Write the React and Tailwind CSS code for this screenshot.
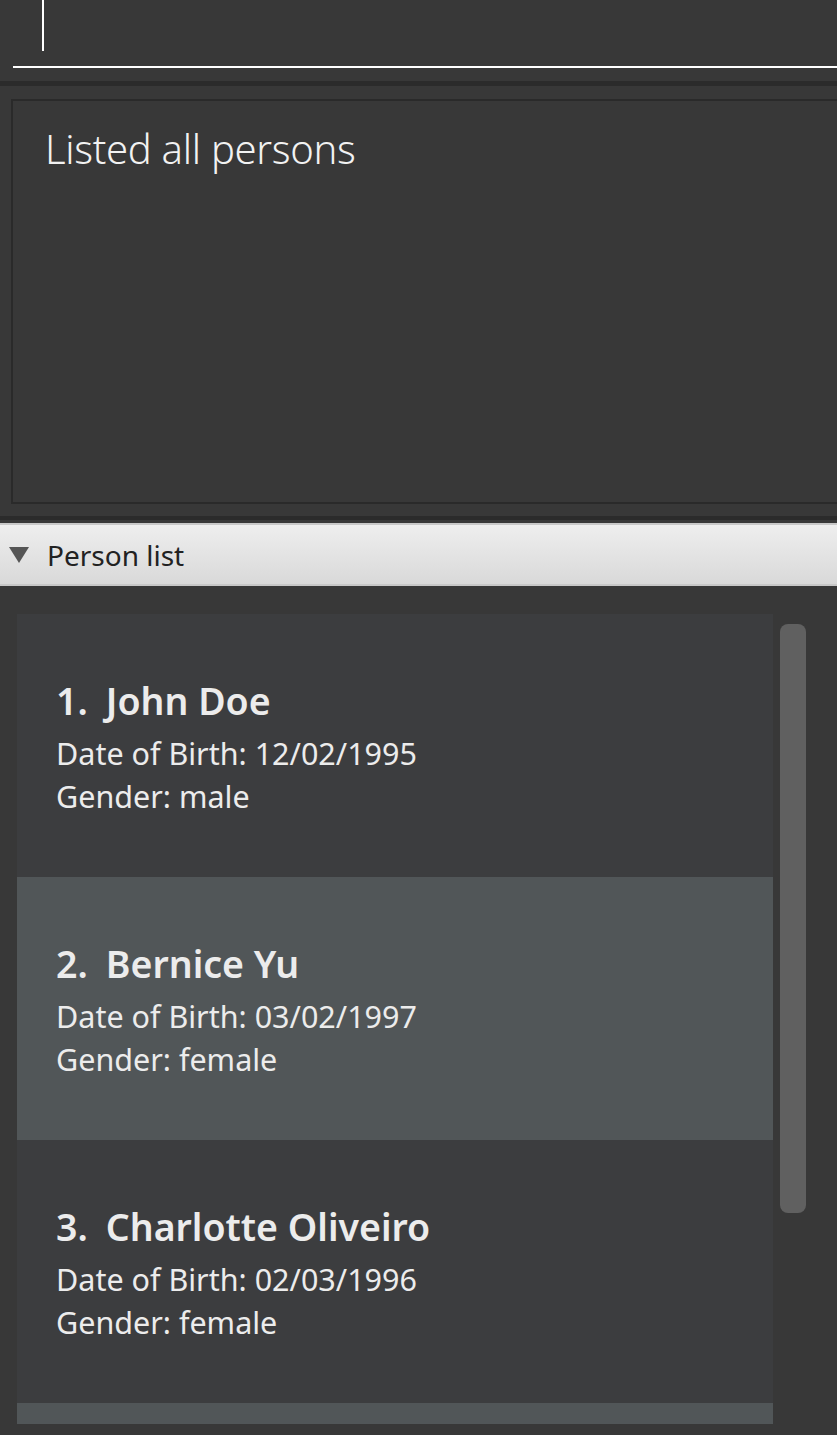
const persons = [
  { id: 1, name: "John Doe", dob: "12/02/1995", gender: "male" },
  { id: 2, name: "Bernice Yu", dob: "03/02/1997", gender: "female" },
  { id: 3, name: "Charlotte Oliveiro", dob: "02/03/1996", gender: "female" },
];

const App = () => {
  return (
    <div
      className="w-[837px] h-[1435px] overflow-hidden bg-[#383838] flex flex-col"
      style={{ fontFamily: '"Noto Sans", "Open Sans", sans-serif' }}
    >
      {/* COMMAND BOX */}
      <div className="h-[81px] pl-[13px] flex flex-col">
        <div className="h-[66px] pl-[29px]">
          <div className="w-[2px] h-[51px] bg-white"></div>
        </div>
        <div className="h-[2px] bg-white"></div>
      </div>

      <div className="h-[5px] bg-[#2b2b2b]"></div>

      {/* RESULT DISPLAY */}
      <div className="h-[430px] pt-[13px] pl-[11px]">
        <div className="h-[405px] border-2 border-r-0 border-[#2a2a2a] pl-[32px] pt-[22px]">
          <p className="text-[#f2f2f2] text-[40px] font-light leading-[52px] tracking-[-0.3px]">
            Listed all persons
          </p>
        </div>
      </div>

      <div className="h-[4px] bg-[#2b2b2b]"></div>
      <div className="h-[3px]"></div>

      {/* PERSON LIST */}
      <div className="h-[63px] border-y-2 border-[#c8c8c8] bg-gradient-to-b from-[#eeeeee] to-[#d9d9d9] flex items-center">
        <svg width="20" height="16" viewBox="0 0 20 16" className="ml-[9px] mr-[18px]">
          <polygon points="0,0 20,0 10,16" fill="#555555" />
        </svg>
        <span className="text-[#222] text-[28px] leading-none">Person list</span>
      </div>

      <div className="flex-1 flex pt-[28px] pl-[17px]">
        <div className="w-[756px] flex flex-col">
          {persons.map((p, i) => (
            <PersonCard key={p.id} person={p} index={i} />
          ))}
          <div className="h-[21px] bg-[#515658]"></div>
        </div>
        <div className="ml-[7px] mt-[10px] w-[26px] h-[589px] rounded-[8px] bg-[#606060]"></div>
      </div>
    </div>
  );
};

export default App;

const PersonCard = ({ person, index }) => {
  const bg = index % 2 === 1 ? "bg-[#515658]" : "bg-[#3c3d3f]";

  return (
    <div className={`h-[263px] ${bg} pl-[39px] pt-[63px] text-[#ececec]`}>
      <div className="flex text-[37.5px] font-semibold leading-[48px]">
        <span className="mr-[18px]">{person.id}.</span>
        <span>{person.name}</span>
      </div>
      <p className="text-[30.5px] leading-[43px] mt-[7px]">Date of Birth: {person.dob}</p>
      <p className="text-[30.5px] leading-[43px]">Gender: {person.gender}</p>
    </div>
  );
};
